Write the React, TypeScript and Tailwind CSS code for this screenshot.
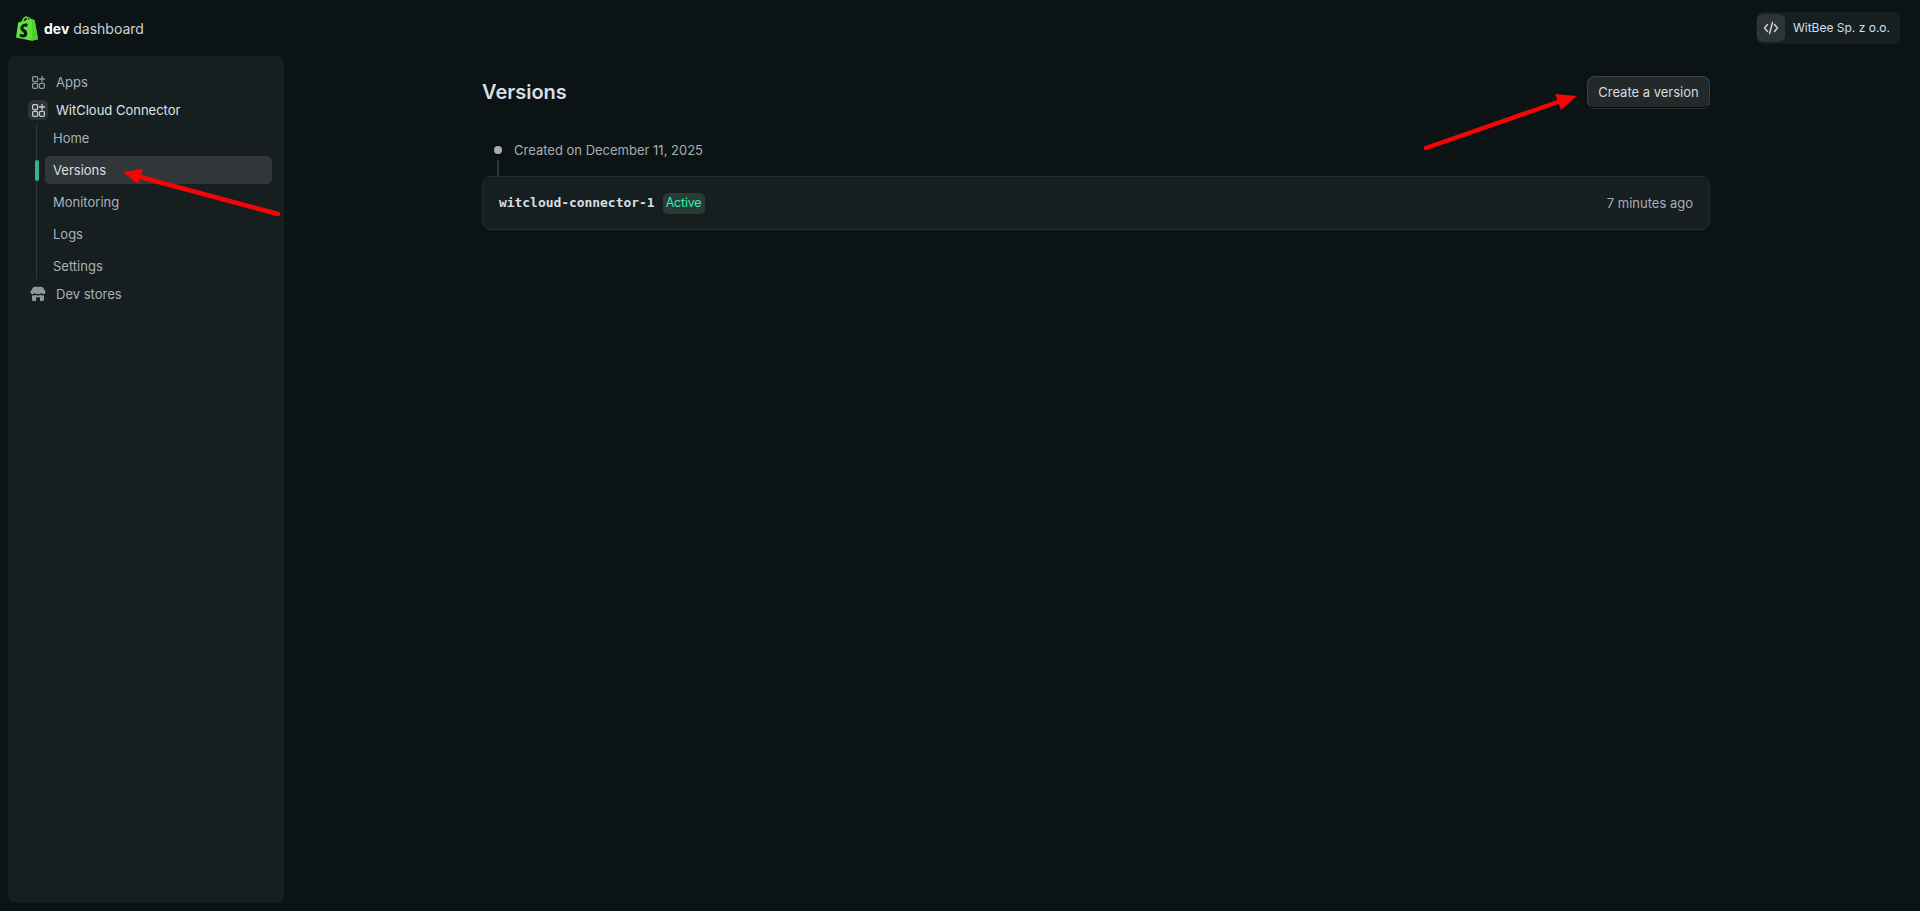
import React from 'react';

const AppsIcon: React.FC = () => (
  <svg viewBox="0 0 16 16" className="h-[15px] w-[15px]" fill="none" stroke="currentColor" strokeWidth="1.400">
    <rect x="1.750" y="1.750" width="5.250" height="5.250" rx="1.250" />
    <rect x="1.750" y="9" width="5.250" height="5.250" rx="1.250" />
    <rect x="9" y="9" width="5.250" height="5.250" rx="1.250" />
    <path d="M11.750 1.500v5.500M9 4.250h5.500" strokeLinecap="round" />
  </svg>
);

const StoreIcon: React.FC = () => (
  <svg viewBox="0 0 16 16" className="h-[16px] w-[16px]" fill="currentColor">
    <path d="M5 .8h6c1 0 1.800.500 2.300 1.300L15.500 5.600c.300 1.500-.800 2.600-2.100 2.600-.900 0-1.600-.400-2-1.100-.500.700-1.300 1.100-2.100 1.100-.500 0-.900-.100-1.300-.400-.400.300-.800.400-1.300.400-.800 0-1.600-.400-2.100-1.100-.400.700-1.100 1.100-2 1.100C1.300 8.200.200 7.100.500 5.600L2.700 2.100C3.200 1.300 4 .8 5 .8Z" />
    <path fillRule="evenodd" d="M2 9.300c.5.100 1 .200 1.500.200.700 0 1.300-.200 1.900-.500.500.300 1.100.500 1.700.500.300 0 .600 0 .900-.100.300.100.600.100.900.100.600 0 1.200-.200 1.700-.500.600.300 1.200.500 1.900.500.500 0 1-.100 1.500-.200V13.500c0 .800-.700 1.500-1.500 1.500h-9C2.700 15 2 14.300 2 13.500V9.300Zm4.500 2c-.300 0-.500.200-.500.500V15h4v-3.200c0-.300-.200-.500-.500-.500h-3Z" />
  </svg>
);

const ShopifyLogo: React.FC = () => (
  <svg viewBox="0 0 22 25" className="h-[25px] w-[22px]">
    <path d="M16 3.200 14.800 3C14.300 1.800 13.500 1 12.500 1c-.200 0-.400 0-.600.100C11.400.500 10.800.200 10.200.300 7.800.500 6.300 3.200 5.800 5.300L3 6.200c-.800.300-.900.300-1 1L0 21.600 15.500 24.700 22 23.200 18.500 4.200c-.900-.500-2-.800-2.500-1Z" fill="#5fe33c" />
    <path d="M16 3.200 15.500 24.700 22 23.200 18.800 4.600c-.900-.700-2-1.200-2.800-1.400Z" fill="#4fd02f" />
    <path d="M11.700 8.500 11 11c-.600-.300-1.300-.500-2-.400-1.600.100-1.600 1.100-1.600 1.300.100 1.400 3.700 1.700 3.900 5 .200 2.600-1.400 4.400-3.600 4.500-2.700.200-4.100-1.400-4.100-1.400l.600-2.400s1.500 1.100 2.700 1c.800 0 1-.700 1-1.100-.100-1.800-3.100-1.700-3.300-4.700-.200-2.500 1.500-5 5.100-5.300 1.200-.100 2 .300 2 .300Z" fill="#0d1414" />
    <path d="M7.500 5.400c.500-1.600 1.500-3.300 2.800-3.800.3.500.4 1.300.4 2.200L7.500 5.400ZM12 3.200c0-.700-.100-1.200-.3-1.600.9.100 1.500 1.100 1.900 1.800L12 3.600V3.200Z" fill="#0d1414" />
  </svg>
);

const NavItem: React.FC<{ label: string; active?: boolean }> = ({ label, active }) => (
  <div className="relative flex h-[32px] shrink-0 items-center pl-[8px] pr-[4px]">
    {active && <span className="absolute left-[-2px] top-[6px] h-[21px] w-[4px] rounded-full bg-[#36b38a]" />}
    <div className={`flex h-[28px] w-full items-center rounded-[5px] pl-[8px] pt-[1px] text-[13px] ${active ? 'bg-[#313739] text-[#d9dfe3]' : 'text-[#a6b2bb]'}`}>
      {label}
    </div>
  </div>
);

const Arrow: React.FC<{ from: [number, number]; base: [number, number]; head: string }> = ({ from, base, head }) => (
  <>
    <line x1={from[0]} y1={from[1]} x2={base[0]} y2={base[1]} stroke="#f50505" strokeWidth="4.500" strokeLinecap="round" />
    <polygon points={head} fill="#f50505" />
  </>
);

export default function App() {
  return (
    <div className="relative flex h-[911px] w-[1920px] flex-col overflow-hidden bg-[#0c1314] text-[13px] text-[#d9dfe3] font-['Inter',sans-serif]">
      <header className="flex h-[56px] shrink-0 items-center justify-between pl-[16px] pr-[20px]">
        <div className="flex items-center gap-[6px]">
          <ShopifyLogo />
          <span className="text-[14px] text-[#cfd3d5]">
            <b className="font-bold text-white">dev</b> dashboard
          </span>
        </div>
        <div className="flex h-[32px] items-center gap-[8px] rounded-[8px] bg-[#171e20] pl-[1px] pr-[10px]">
          <div className="flex h-[28px] w-[28px] items-center justify-center rounded-[6px] bg-[#2d3436] text-[#d5dadc]">
            <svg viewBox="0 0 16 16" className="h-[16px] w-[16px]" fill="none" stroke="currentColor" strokeWidth="1.400" strokeLinecap="round" strokeLinejoin="round">
              <path d="M4.500 4.500 1.500 8l3 3.500M11.500 4.500l3 3.500-3 3.500M9.500 2.500l-3 11" />
            </svg>
          </div>
          <span className="text-[12px] text-[#cfe0ea]">WitBee Sp. z o.o.</span>
        </div>
      </header>

      <div className="flex min-h-0 flex-1 pb-[8px] pl-[8px]">
        <aside className="w-[276px] shrink-0 rounded-[8px] bg-[#171e20] pl-[20px] pr-[8px] pt-[12px]">
          <div className="flex h-[28px] items-center gap-[8px] text-[13px] text-[#a6b2bb]">
            <div className="flex h-[20px] w-[20px] items-center justify-center text-[#8e979b]"><AppsIcon /></div>
            <span className="pt-[1px]">Apps</span>
          </div>
          <div className="flex h-[28px] items-center gap-[8px] text-[13px] text-[#dbe4ea]">
            <div className="flex h-[20px] w-[20px] items-center justify-center rounded-[5px] bg-[#2d3436] text-[#c6cbce]"><AppsIcon /></div>
            <span className="pt-[1px]">WitCloud Connector</span>
          </div>
          <div className="mb-[1px] ml-[8px] flex h-[155px] flex-col border-l border-[#2b3a3d]">
            <div className="-mt-[2px]">
              <NavItem label="Home" />
            </div>
            <NavItem label="Versions" active />
            <NavItem label="Monitoring" />
            <NavItem label="Logs" />
            <NavItem label="Settings" />
          </div>
          <div className="flex h-[28px] items-center gap-[8px] text-[13px] text-[#a6b2bb]">
            <div className="flex h-[20px] w-[20px] items-center justify-center text-[#8e979b]"><StoreIcon /></div>
            <span className="pt-[1px]">Dev stores</span>
          </div>
        </aside>

        <main className="ml-[198px] w-[1228px] shrink-0">
          <div className="mt-[20px] flex h-[32px] items-center justify-between">
            <h1 className="text-[20px] font-semibold text-[#dadde2]">Versions</h1>
            <button className="h-[32px] w-[123px] rounded-[8px] border border-[#3a4244] border-b-[#050708] bg-[#23292b] pt-[1px] text-[13px] text-[#d5dadc] shadow-[0_1px_0_#2c3335]">
              Create a version
            </button>
          </div>
          <div className="mt-[32px] flex h-[20px] items-center pl-[12px]">
            <span className="h-[8px] w-[8px] rounded-full bg-[#a9adb3]" />
            <span className="ml-[12px] pt-[1px] text-[13px] text-[#a6aeb5]">Created on December 11, 2025</span>
          </div>
          <div className="ml-[15px] h-[16px] w-[2px] bg-[#2f3540]" />
          <div className="flex h-[54px] items-center justify-between rounded-[8px] border border-[#212d30] bg-[#171e20] pl-[16px] pr-[16px]">
            <div className="flex items-center gap-[8px]">
              <span className="font-['DejaVu_Sans_Mono',monospace] text-[13px] font-bold tracking-[-0.050px] text-[#d8dee3]">witcloud-connector-1</span>
              <span className="flex h-[21px] w-[42px] items-center justify-center rounded-[5px] bg-[#2a3a34] text-[12.500px] tracking-[-0.200px] text-[#2cf0ad]">Active</span>
            </div>
            <span className="pt-[1px] text-[13px] text-[#a6aeb5]">7 minutes ago</span>
          </div>
        </main>
      </div>

      <svg className="pointer-events-none absolute left-0 top-0 h-[911px] w-[1920px]">
        <Arrow from={[278, 214]} base={[140, 177]} head="123,172 143,169 138,184" />
        <Arrow from={[1426, 148]} base={[1558, 102]} head="1577,96 1555,94 1561,110" />
      </svg>
    </div>
  );
}
